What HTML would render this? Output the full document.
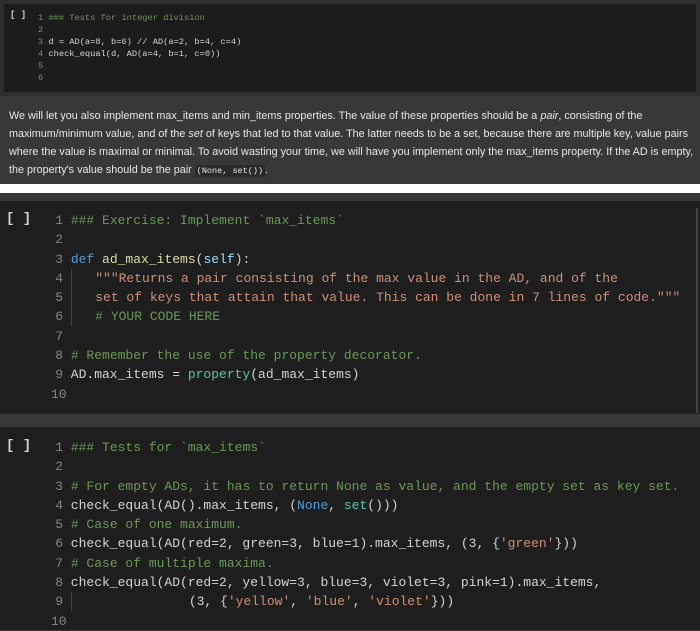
<!DOCTYPE html>
<html><head><style>
body{margin:0;width:700px;height:630px;background:#383838;overflow:hidden;position:relative;font-family:"Liberation Mono",monospace}
.cell{position:absolute;background:#1e1e1e;}
.ln{position:absolute;white-space:pre;color:#d4d4d4}
.n{color:#858585;display:inline-block;text-align:right}
.c{color:#6a9955}.k{color:#569cd6}.f{color:#dcdcaa}.s{color:#ce9178}.t{color:#4ec9b0}.v{color:#9cdcfe}
.br{position:absolute;color:#d4d4d4;font-weight:bold}
.p{position:absolute;left:9px;top:107px;width:690px;font-family:"Liberation Sans",sans-serif;font-size:10.8px;line-height:18px;color:#e8e8e8}
.p code{font-family:"Liberation Mono",monospace;font-size:8.5px;background:#2a2a2a;padding:1px 2px}
.g{border-left:1px solid #404040;display:inline-block;height:19px;vertical-align:top}
</style></head><body>
<div style="position:absolute;left:0;top:0;width:700px;height:96px;background:#2e2e2e"></div>
<div class="cell" style="left:4px;top:4px;width:692px;height:88px;background:#1c1c1c"></div>
<div class="br" style="left:10px;top:10px;font-size:9px">[ ]</div>
<div style="position:absolute;left:38px;top:12px;font-size:8.7px;line-height:12px">
<div class="ln" style="position:static"><span class="n">1</span> <span class="c">### Tests for integer division</span></div>
<div class="ln" style="position:static"><span class="n">2</span></div>
<div class="ln" style="position:static"><span class="n">3</span> d = AD(a=8, b=6) // AD(a=2, b=4, c=4)</div>
<div class="ln" style="position:static"><span class="n">4</span> check_equal(d, AD(a=4, b=1, c=0))</div>
<div class="ln" style="position:static"><span class="n">5</span></div>
<div class="ln" style="position:static"><span class="n">6</span></div>
</div>
<div class="p">We will let you also implement max_items and min_items properties. The value of these properties should be a <i>pair</i>, consisting of the maximum/minimum value, and of the <i>set</i> of keys that led to that value. The latter needs to be a set, because there are multiple key, value pairs where the value is maximal or minimal. To avoid wasting your time, we will have you implement only the max_items property. If the AD is empty, the property's value should be the pair <code>(None, set())</code>.</div>
<div style="position:absolute;left:0;top:184px;width:700px;height:9px;background:#fff"></div>
<div class="cell" style="left:0;top:201px;width:700px;height:213px"></div>
<div class="cell" style="left:0;top:427px;width:700px;height:203px"></div>
<div style="position:absolute;left:696px;top:208px;width:2px;height:205px;background:#444"></div>
<div class="br" style="left:6px;top:211px;font-size:14px">[ ]</div>
<div style="position:absolute;left:51px;top:211px;font-size:13px;line-height:19.3px">
<div class="ln" style="position:static"><span class="n" style="width:12px">1</span> <span class="c">### Exercise: Implement `max_items`</span></div>
<div class="ln" style="position:static"><span class="n" style="width:12px">2</span></div>
<div class="ln" style="position:static"><span class="n" style="width:12px">3</span> <span class="k">def</span> <span class="f">ad_max_items</span>(<span class="v">self</span>):</div>
<div class="ln" style="position:static"><span class="n" style="width:12px">4</span> <span class="g"></span>   <span class="s">"""Returns a pair consisting of the max value in the AD, and of the</span></div>
<div class="ln" style="position:static"><span class="n" style="width:12px">5</span> <span class="g"></span>   <span class="s">set of keys that attain that value. This can be done in 7 lines of code."""</span></div>
<div class="ln" style="position:static"><span class="n" style="width:12px">6</span> <span class="g"></span>   <span class="c"># YOUR CODE HERE</span></div>
<div class="ln" style="position:static"><span class="n" style="width:12px">7</span></div>
<div class="ln" style="position:static"><span class="n" style="width:12px">8</span> <span class="c"># Remember the use of the property decorator.</span></div>
<div class="ln" style="position:static"><span class="n" style="width:12px">9</span> AD.max_items = <span class="t">property</span>(ad_max_items)</div>
<div class="ln" style="position:static"><span class="n" style="width:12px">10</span></div>
</div>
<div class="br" style="left:6px;top:438px;font-size:14px">[ ]</div>
<div style="position:absolute;left:51px;top:438px;font-size:13px;line-height:19.3px">
<div class="ln" style="position:static"><span class="n" style="width:12px">1</span> <span class="c">### Tests for `max_items`</span></div>
<div class="ln" style="position:static"><span class="n" style="width:12px">2</span></div>
<div class="ln" style="position:static"><span class="n" style="width:12px">3</span> <span class="c"># For empty ADs, it has to return None as value, and the empty set as key set.</span></div>
<div class="ln" style="position:static"><span class="n" style="width:12px">4</span> check_equal(AD().max_items, (<span class="k">None</span>, <span class="t">set</span>()))</div>
<div class="ln" style="position:static"><span class="n" style="width:12px">5</span> <span class="c"># Case of one maximum.</span></div>
<div class="ln" style="position:static"><span class="n" style="width:12px">6</span> check_equal(AD(red=2, green=3, blue=1).max_items, (3, {<span class="s">'green'</span>}))</div>
<div class="ln" style="position:static"><span class="n" style="width:12px">7</span> <span class="c"># Case of multiple maxima.</span></div>
<div class="ln" style="position:static"><span class="n" style="width:12px">8</span> check_equal(AD(red=2, yellow=3, blue=3, violet=3, pink=1).max_items,</div>
<div class="ln" style="position:static"><span class="n" style="width:12px">9</span> <span class="g"></span>               (3, {<span class="s">'yellow'</span>, <span class="s">'blue'</span>, <span class="s">'violet'</span>}))</div>
<div class="ln" style="position:static"><span class="n" style="width:12px">10</span></div>
</div>
</body></html>
